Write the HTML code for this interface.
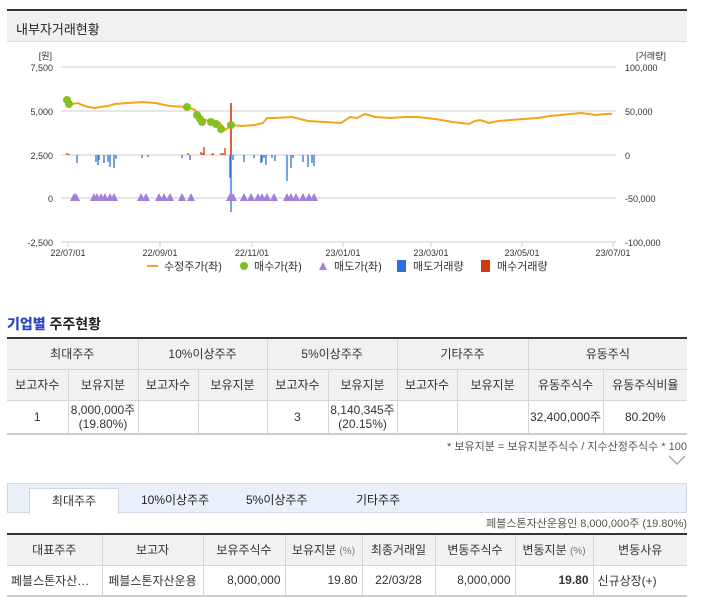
<!DOCTYPE html>
<html><head><meta charset="utf-8"><style>
*{margin:0;padding:0;box-sizing:border-box}
body{width:701px;height:607px;background:#fff;font-family:"Liberation Sans","Noto Sans CJK KR",sans-serif;color:#333;position:relative;overflow:hidden;font-size:12px}
.hd{position:absolute;left:7px;top:9px;width:680px;height:33px;background:#f1f1f1;border-top:2px solid #333;border-bottom:1px solid #ddd;font-size:13px;padding:8px 0 0 9px;color:#222}
.ttl{position:absolute;left:7px;top:314px;font-size:14px;font-weight:bold;color:#222}
.ttl b{color:#2a49c1}
table{position:absolute;left:7px;border-collapse:collapse;table-layout:fixed;font-size:12px}
td{border-left:1px solid #d5d5d5;border-bottom:1px solid #d5d5d5;text-align:center;color:#333;overflow:hidden;white-space:nowrap}
td:first-child{border-left:none}
.th td{background:#f1f1f1}
.t1{top:337px;width:680px;border-top:2px solid #333;border-bottom:2px solid #ccc}
.t2{top:533px;width:680px;border-top:2px solid #333;border-bottom:2px solid #ccc}
.note{position:absolute;right:14px;top:438px;font-size:11px;color:#555}
.tabs{position:absolute;left:7px;top:483px;width:680px;height:30px;background:#eaf0fa;border:1px solid #d0d8e4}
.tab{position:absolute;top:7px;font-size:12px;color:#222}
.act{position:absolute;left:21px;top:4px;width:90px;height:26px;background:#fff;border:1px solid #d0d8e4;border-bottom:none;text-align:center;padding-top:3px}
.cap{position:absolute;right:14px;top:515px;font-size:11px;color:#555}
</style></head><body>
<div class="hd">내부자거래현황</div>
<svg style="position:absolute;left:0;top:0" width="701" height="290" font-family="Liberation Sans,Noto Sans CJK KR,sans-serif" font-size="9">
<g stroke="#ddd" stroke-width="1.5">
<line x1="61" y1="67" x2="616" y2="67"/><line x1="61" y1="111" x2="616" y2="111"/><line x1="61" y1="155" x2="616" y2="155"/><line x1="61" y1="198" x2="616" y2="198"/></g>
<line x1="61" y1="242" x2="616" y2="242" stroke="#ccc"/>
<g stroke="#ccc"><line x1="68" y1="242" x2="68" y2="247"/><line x1="160" y1="242" x2="160" y2="247"/><line x1="252" y1="242" x2="252" y2="247"/><line x1="343" y1="242" x2="343" y2="247"/><line x1="431" y1="242" x2="431" y2="247"/><line x1="522" y1="242" x2="522" y2="247"/><line x1="613" y1="242" x2="613" y2="247"/></g>
<g fill="#333" text-anchor="end"><text x="52" y="59">[원]</text><text x="53" y="71">7,500</text><text x="53" y="115">5,000</text><text x="53" y="159">2,500</text><text x="53" y="202">0</text><text x="53" y="246">-2,500</text></g>
<g fill="#333"><text x="636" y="59">[거래량]</text><text x="625" y="71">100,000</text><text x="625" y="115">50,000</text><text x="625" y="159">0</text><text x="625" y="202">-50,000</text><text x="625" y="246">-100,000</text></g>
<g fill="#333" text-anchor="middle"><text x="68" y="256">22/07/01</text><text x="160" y="256">22/09/01</text><text x="252" y="256">22/11/01</text><text x="343" y="256">23/01/01</text><text x="431" y="256">23/03/01</text><text x="522" y="256">23/05/01</text><text x="613" y="256">23/07/01</text></g>
<g stroke="#2d6fe0" stroke-width="1.3">
<line x1="77" y1="155" x2="77" y2="163"/><line x1="96" y1="155" x2="96" y2="162"/><line x1="98" y1="155" x2="98" y2="165"/><line x1="99" y1="155" x2="99" y2="160"/><line x1="104" y1="155" x2="104" y2="163"/><line x1="108" y1="155" x2="108" y2="162"/><line x1="110" y1="155" x2="110" y2="167"/><line x1="114" y1="155" x2="114" y2="168"/><line x1="116" y1="155" x2="116" y2="159"/><line x1="142" y1="155" x2="142" y2="158"/><line x1="148" y1="155" x2="148" y2="157"/><line x1="182" y1="155" x2="182" y2="158"/><line x1="190" y1="155" x2="190" y2="160"/><line x1="230" y1="155" x2="230" y2="178"/><line x1="231" y1="155" x2="231" y2="212"/><line x1="233" y1="155" x2="233" y2="160"/><line x1="244" y1="155" x2="244" y2="162"/><line x1="254" y1="155" x2="254" y2="158"/><line x1="261" y1="155" x2="261" y2="163"/><line x1="262" y1="155" x2="262" y2="162"/><line x1="264" y1="155" x2="264" y2="158"/><line x1="266" y1="155" x2="266" y2="165"/><line x1="272" y1="155" x2="272" y2="158"/><line x1="275" y1="155" x2="275" y2="161"/><line x1="287" y1="155" x2="287" y2="181"/><line x1="291" y1="155" x2="291" y2="168"/><line x1="293" y1="155" x2="293" y2="158"/><line x1="303" y1="155" x2="303" y2="162"/><line x1="308" y1="155" x2="308" y2="167"/><line x1="312" y1="155" x2="312" y2="163"/><line x1="314" y1="155" x2="314" y2="166"/></g>
<g stroke="#d23a0a" stroke-width="1.3">
<line x1="67" y1="155" x2="67" y2="153"/><line x1="69" y1="155" x2="69" y2="154"/><line x1="188" y1="155" x2="188" y2="153"/><line x1="201" y1="155" x2="201" y2="152"/><line x1="203" y1="155" x2="203" y2="153"/><line x1="204" y1="155" x2="204" y2="147"/><line x1="212" y1="155" x2="212" y2="154"/><line x1="213" y1="155" x2="213" y2="153"/><line x1="221" y1="155" x2="221" y2="153"/><line x1="223" y1="155" x2="223" y2="153"/><line x1="225" y1="155" x2="225" y2="148"/><line x1="231" y1="155" x2="231" y2="103" stroke-width="1.6"/></g>
<polyline fill="none" stroke="#f7a21b" stroke-width="2" points="67,100 72,104 78,103 82,105 88,107 95,108 100,107 108,106 115,104 128,103 142,102 155,103 170,106 187,107 195,110 198,115 202,119 212,122 220,123 225,130 232,125 242,126 255,125 263,123 267,118 275,118 292,117 308,121 325,122 341,123 350,117 357,118 365,114 375,117 390,118 405,117 417,117 435,119 453,122 469,124 475,121 480,120 489,123 498,121 510,120 538,118 550,116 561,115 570,114 581,113 596,115 605,114 612,114"/>
<g fill="#7fbf1a" opacity="0.95"><circle cx="67" cy="100" r="4"/><circle cx="69" cy="104" r="4"/><circle cx="187" cy="107" r="4"/><circle cx="197" cy="115" r="4"/><circle cx="200" cy="119" r="4"/><circle cx="202" cy="122" r="4"/><circle cx="211" cy="122" r="4"/><circle cx="216" cy="124" r="4"/><circle cx="221" cy="129" r="4"/><circle cx="231" cy="125" r="4"/></g>
<g fill="#a47fdc">
<path d="M74 193l4 8h-8z M76 193l4 8h-8z M94 193l4 8h-8z M97 193l4 8h-8z M101 193l4 8h-8z M105 193l4 8h-8z M110 193l4 8h-8z M114 193l4 8h-8z M141 193l4 8h-8z M146 193l4 8h-8z M159 193l4 8h-8z M164 193l4 8h-8z M170 193l4 8h-8z M182 193l4 8h-8z M191 193l4 8h-8z M230 193l4 8h-8z M233 193l4 8h-8z M244 193l4 8h-8z M251 193l4 8h-8z M258 193l4 8h-8z M262 193l4 8h-8z M267 193l4 8h-8z M274 193l4 8h-8z M287 193l4 8h-8z M291 193l4 8h-8z M296 193l4 8h-8z M303 193l4 8h-8z M309 193l4 8h-8z M314 193l4 8h-8z"/></g>
<g font-size="11" fill="#333">
<line x1="147" y1="266" x2="158" y2="266" stroke="#f7a21b" stroke-width="2"/><text x="164" y="270">수정주가(좌)</text>
<circle cx="244" cy="266" r="4" fill="#7fbf1a"/><text x="254" y="270">매수가(좌)</text>
<path d="M323 262l4 8h-8z" fill="#a47fdc"/><text x="334" y="270">매도가(좌)</text>
<rect x="397" y="260" width="9" height="12" fill="#2d6fe0"/><text x="413" y="270">매도거래량</text>
<rect x="481" y="260" width="9" height="12" fill="#d23a0a"/><text x="497" y="270">매수거래량</text></g>
</svg>
<div class="ttl"><b>기업별</b> 주주현황</div>
<table class="t1">
<colgroup><col style="width:61px"><col style="width:70px"><col style="width:60px"><col style="width:69px"><col style="width:61px"><col style="width:69px"><col style="width:60px"><col style="width:71px"><col style="width:75px"><col style="width:84px"></colgroup>
<tr class="th" style="height:31px"><td colspan="2">최대주주</td><td colspan="2">10%이상주주</td><td colspan="2">5%이상주주</td><td colspan="2">기타주주</td><td colspan="2">유동주식</td></tr>
<tr class="th" style="height:31px"><td>보고자수</td><td>보유지분</td><td>보고자수</td><td>보유지분</td><td>보고자수</td><td>보유지분</td><td>보고자수</td><td>보유지분</td><td>유동주식수</td><td>유동주식비율</td></tr>
<tr style="height:34px;line-height:14px"><td>1</td><td>8,000,000주<br>(19.80%)</td><td></td><td></td><td>3</td><td>8,140,345주<br>(20.15%)</td><td></td><td></td><td>32,400,000주</td><td>80.20%</td></tr>
</table>
<div class="note">* 보유지분 = 보유지분주식수 / 지수산정주식수 * 100</div>
<svg style="position:absolute;left:668px;top:454px" width="18" height="12"><polyline points="1,2 9,10 17,2" fill="none" stroke="#aaa" stroke-width="1.5"/></svg>
<div class="tabs"><div class="act">최대주주</div><div class="tab" style="left:133px">10%이상주주</div><div class="tab" style="left:238px">5%이상주주</div><div class="tab" style="left:348px">기타주주</div></div>
<div class="cap">페블스톤자산운용인 8,000,000주 (19.80%)</div>
<table class="t2">
<colgroup><col style="width:95px"><col style="width:101px"><col style="width:82px"><col style="width:77px"><col style="width:73px"><col style="width:80px"><col style="width:78px"><col style="width:94px"></colgroup>
<tr class="th" style="height:31px"><td>대표주주</td><td>보고자</td><td>보유주식수</td><td>보유지분 <span style="font-size:10px;color:#777">(%)</span></td><td>최종거래일</td><td>변동주식수</td><td>변동지분 <span style="font-size:10px;color:#777">(%)</span></td><td>변동사유</td></tr>
<tr style="height:31px"><td style="text-align:left;padding-left:4px">페블스톤자산…</td><td>페블스톤자산운용</td><td style="text-align:right;padding-right:4px">8,000,000</td><td style="text-align:right;padding-right:4px">19.80</td><td>22/03/28</td><td style="text-align:right;padding-right:4px">8,000,000</td><td style="text-align:right;padding-right:4px;font-weight:bold">19.80</td><td style="text-align:left;padding-left:4px">신규상장(+)</td></tr>
</table>
</body></html>
